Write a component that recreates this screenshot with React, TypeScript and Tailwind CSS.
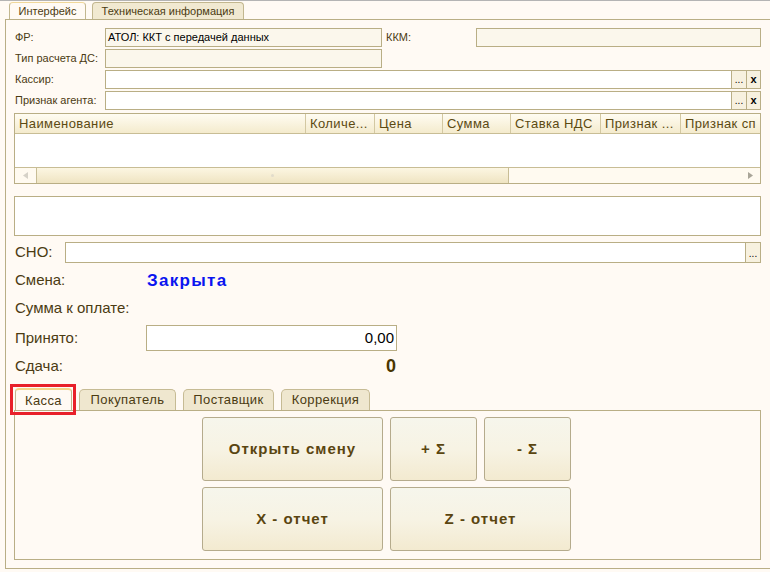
import { ReactNode } from 'react';

const columns = [
  { title: 'Наименование', w: 'w-[291px]' },
  { title: 'Количе...', w: 'w-[69px]' },
  { title: 'Цена', w: 'w-[68px]' },
  { title: 'Сумма', w: 'w-[68px]' },
  { title: 'Ставка НДС', w: 'w-[90px]' },
  { title: 'Признак ...', w: 'w-[80px]' },
  { title: 'Признак сп', w: 'w-[81px]' },
];

function PickButtons({ clear = true }: { clear?: boolean }) {
  return (
    <div className="ml-auto flex h-full">
      <div className="flex w-[15px] items-end justify-center border-l border-[#b9ae85] bg-[#f7f1df] pb-[3px] text-[10px] leading-none text-black">
        ...
      </div>
      {clear && (
        <div className="flex w-[14px] items-center justify-center border-l border-[#b9ae85] bg-[#f7f1df] text-[11px] font-bold leading-none text-black">
          x
        </div>
      )}
    </div>
  );
}

function FormButton({ children, className }: { children: ReactNode; className: string }) {
  return (
    <button
      className={`flex items-center justify-center rounded-[3px] border border-[#b5ab8c] bg-gradient-to-b from-[#f6f6ec] via-[#f7f3e4] to-[#f3ead0] text-[15px] font-bold tracking-[1px] text-[#5a4510] ${className}`}
    >
      {children}
    </button>
  );
}

export default function App() {
  return (
    <div
      className="relative flex h-[572px] w-[770px] flex-col overflow-hidden bg-[#fffaf4] text-[#4b3b12]"
      style={{ fontFamily: '"Liberation Sans", Arial, sans-serif' }}
    >
      <div className="h-px bg-[#b4b4b4]" />

      {/* top tabs */}
      <div className="flex h-[18px] items-end gap-[6px] pl-[9px]">
        <div className="-mb-px flex h-[18px] w-[77px] items-center justify-center rounded-t-[4px] border border-b-0 border-[#c2b78f] border-t-[#f0d89a] bg-[#fffaf4] text-[11px]">
          Интерфейс
        </div>
        <div className="flex h-[17px] w-[152px] items-center justify-center rounded-t-[4px] border border-b-0 border-[#c2b78f] bg-[#f1e9d1] text-[11px]">
          Техническая информация
        </div>
      </div>

      {/* main panel */}
      <div className="ml-[5px] flex h-[550px] w-[770px] flex-col border-y border-l border-[#b9ae85] pl-[8px] pt-[8px]">
        <div className="flex w-[747px] flex-col gap-[2px] text-[11px]">
          <div className="flex h-[19px] items-center">
            <div className="w-[91px] pl-px">ФР:</div>
            <div className="flex h-full w-[277px] items-center border border-[#b9ae85] bg-[#fbf7ec] pl-[2px] text-black">
              АТОЛ: ККТ с передачей данных
            </div>
            <div className="w-[94px] pl-[4px]">ККМ:</div>
            <div className="h-full w-[285px] border border-[#b9ae85] bg-[#fbf7ec]" />
          </div>
          <div className="flex h-[19px] items-center">
            <div className="w-[91px] pl-px">Тип расчета ДС:</div>
            <div className="h-full w-[277px] border border-[#b9ae85] bg-[#fbf7ec]" />
          </div>
          <div className="flex h-[19px] items-center">
            <div className="w-[91px] pl-px">Кассир:</div>
            <div className="flex h-full flex-1 border border-[#b9ae85] bg-white">
              <PickButtons />
            </div>
          </div>
          <div className="flex h-[19px] items-center">
            <div className="w-[91px] pl-px">Признак агента:</div>
            <div className="flex h-full flex-1 border border-[#b9ae85] bg-white">
              <PickButtons />
            </div>
          </div>
        </div>

        {/* table */}
        <div className="mt-[3px] flex h-[71px] w-[747px] flex-col overflow-hidden border border-[#b9ae85] bg-white">
          <div className="flex h-[20px] shrink-0 border-b border-[#c8bd95] bg-gradient-to-b from-[#fffcf2] to-[#f4ebcd] text-[13px] tracking-[0.4px] text-[#5c4a12]">
            {columns.map((c, i) => (
              <div
                key={c.title}
                className={`${c.w} flex shrink-0 items-center overflow-hidden whitespace-nowrap pl-[4px] ${i < columns.length - 1 ? 'border-r border-[#d3c8a2]' : ''}`}
              >
                {c.title}
              </div>
            ))}
          </div>
          <div className="h-[33px] shrink-0" />
          <div className="flex h-[16px] shrink-0 border-t border-[#c8bd95] bg-[#fffaf0]">
            <div className="flex w-[21px] items-center justify-center">
              <svg width="6" height="7" viewBox="0 0 6 7">
                <path d="M5 0 L0 3.5 L5 7 Z" fill="#d6d2c8" />
              </svg>
            </div>
            <div className="relative flex w-[473px] items-center justify-center border-x border-[#c8bd95] bg-gradient-to-b from-[#fcf6e2] to-[#efe4c2]">
              <div className="h-[3px] w-[3px] rounded-full bg-[#e2dccb]" />
            </div>
            <div className="flex-1" />
            <div className="flex w-[21px] items-center justify-center">
              <svg width="6" height="7" viewBox="0 0 6 7">
                <path d="M1 0 L6 3.5 L1 7 Z" fill="#a9a598" />
              </svg>
            </div>
          </div>
        </div>

        <div className="mt-[12px] h-[40px] w-[747px] border border-[#b9ae85] bg-white" />

        <div className="mt-[6px] flex h-[21px] w-[747px] items-center text-[15px]">
          <div className="w-[51px] pl-px">СНО:</div>
          <div className="flex h-full flex-1 border border-[#b9ae85] bg-white">
            <PickButtons clear={false} />
          </div>
        </div>

        <div className="mt-[4px] flex h-[27px] items-center text-[15px]">
          <div className="w-[133px] pl-px">Смена:</div>
          <div className="text-[17px] font-bold tracking-[1.3px] text-[#0a14f0]">Закрыта</div>
        </div>
        <div className="flex h-[29px] items-center text-[15px]">
          <div className="w-[133px] pl-px">Сумма к оплате:</div>
        </div>
        <div className="mt-[2px] flex h-[26px] items-center text-[15px]">
          <div className="w-[132px] pl-px">Принято:</div>
          <div className="flex h-full w-[251px] items-center justify-end border border-[#b9ae85] bg-white pr-[2px] text-black">
            0,00
          </div>
        </div>
        <div className="flex h-[31px] items-center text-[15px]">
          <div className="w-[132px] pl-px">Сдача:</div>
          <div className="w-[251px] pr-px text-right text-[18px] font-bold text-[#4a3600]">0</div>
        </div>

        {/* bottom tabs */}
        <div className="mt-[6px] flex h-[22px] items-end gap-[7px] pl-px text-[13px] tracking-[0.4px]">
          <div className="-mb-px flex h-[23px] w-[57px] items-center justify-center rounded-t-[4px] border border-b-0 border-[#c2b78f] border-t-2 border-t-[#f3d488] bg-[#fffaf4]">
            Касса
          </div>
          <div className="flex h-[21px] w-[97px] items-center justify-center rounded-t-[5px] border border-b-0 border-[#c6bb94] bg-[#efe7cf]">
            Покупатель
          </div>
          <div className="flex h-[21px] w-[91px] items-center justify-center rounded-t-[5px] border border-b-0 border-[#c6bb94] bg-[#efe7cf]">
            Поставщик
          </div>
          <div className="flex h-[21px] w-[89px] items-center justify-center rounded-t-[5px] border border-b-0 border-[#c6bb94] bg-[#efe7cf]">
            Коррекция
          </div>
        </div>
        <div className="h-[150px] w-[747px] border border-[#b9ae85] pl-[187px] pt-[6px]">
          <div className="grid grid-cols-[181px_87px_87px] grid-rows-[64px_64px] gap-x-[7px] gap-y-[6px]">
            <FormButton className="">Открыть смену</FormButton>
            <FormButton className="">+ Σ</FormButton>
            <FormButton className="">- Σ</FormButton>
            <FormButton className="">X - отчет</FormButton>
            <FormButton className="col-span-2">Z - отчет</FormButton>
          </div>
        </div>
      </div>

      {/* red highlight over the active tab */}
      <div className="absolute left-[10px] top-[384px] h-[31px] w-[66px] border-[3px] border-[#e8202a]" />
    </div>
  );
}
